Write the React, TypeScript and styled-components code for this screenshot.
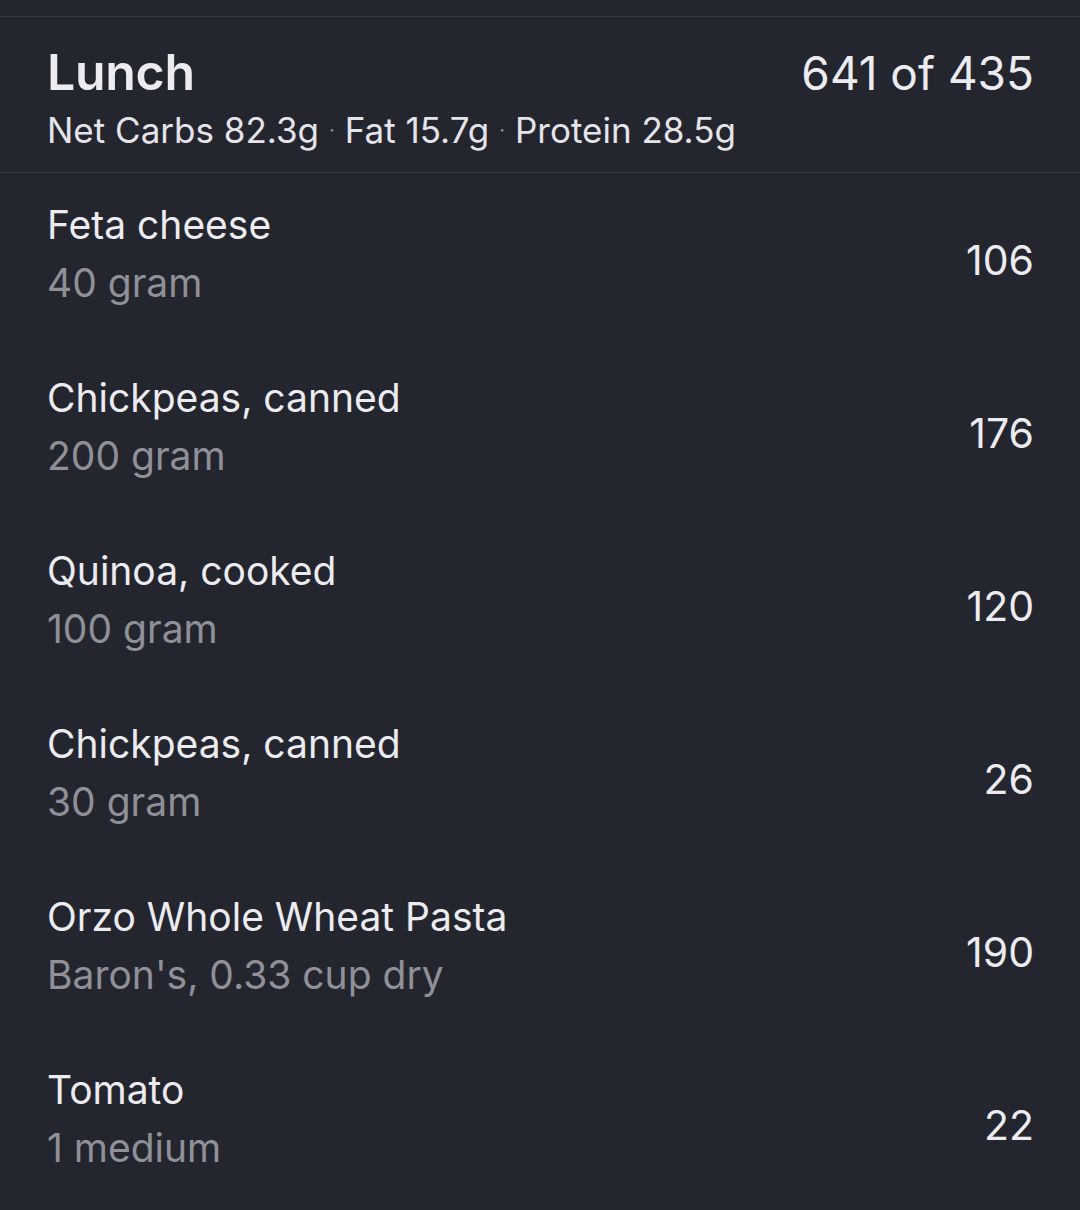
import React from "react"
import styled, { createGlobalStyle } from "styled-components"

const GlobalStyle = createGlobalStyle`
  html, body {
    margin: 0;
    padding: 0;
    background: #24262f;
  }
  body {
    font-family: Inter, "Noto Sans", "Liberation Sans", sans-serif;
    -webkit-font-smoothing: antialiased;
  }
`

const Page = styled.div`
  width: 1080px;
  min-height: 1210px;
  background: #24262f;
  padding-top: 16px;
  box-sizing: border-box;
`

const Section = styled.section`
  border-top: 1px solid #363843;
`

const Header = styled.header`
  display: flex;
  flex-direction: column;
  gap: 6px;
  padding: 25px 46px 21px 47px;
  border-bottom: 1px solid #363843;
`

const TitleRow = styled.div`
  display: flex;
  justify-content: space-between;
  align-items: baseline;
`

const Title = styled.h2`
  margin: 0;
  font-size: 50px;
  font-weight: 600;
  color: #ececf0;
  letter-spacing: -0.3px;
  line-height: 60px;
`

const Total = styled.div`
  font-size: 46px;
  font-weight: 400;
  color: #ececf0;
  line-height: 60px;
`

const Macros = styled.div`
  display: flex;
  align-items: center;
  gap: 10px;
  font-size: 35px;
  color: #e4e4ea;
  line-height: 42px;
`

const Dot = styled.span`
  color: #8d8f98;
  font-size: 20px;
`

const FoodRow = styled.div`
  display: flex;
  justify-content: space-between;
  align-items: center;
  height: 173px;
  padding: 0 46px 0 47px;
  box-sizing: border-box;
`

const FoodInfo = styled.div`
  display: flex;
  flex-direction: column;
  padding-bottom: 11px;
`

const FoodName = styled.div`
  font-size: 39px;
  color: #ececf0;
  line-height: 58px;
`

const FoodAmount = styled.div`
  font-size: 39px;
  color: #8f9098;
  line-height: 58px;
`

const Calories = styled.div`
  font-size: 41px;
  color: #ececf0;
`

const foods = [
  { name: "Feta cheese", amount: "40 gram", cal: 106 },
  { name: "Chickpeas, canned", amount: "200 gram", cal: 176 },
  { name: "Quinoa, cooked", amount: "100 gram", cal: 120 },
  { name: "Chickpeas, canned", amount: "30 gram", cal: 26 },
  { name: "Orzo Whole Wheat Pasta", amount: "Baron's, 0.33 cup dry", cal: 190 },
  { name: "Tomato", amount: "1 medium", cal: 22 },
]

export default function App() {
  return (
    <Page>
      <GlobalStyle />
      <Section>
        <Header>
          <TitleRow>
            <Title>Lunch</Title>
            <Total>641 of 435</Total>
          </TitleRow>
          <Macros>
            <span>Net Carbs 82.3g</span>
            <Dot>·</Dot>
            <span>Fat 15.7g</span>
            <Dot>·</Dot>
            <span>Protein 28.5g</span>
          </Macros>
        </Header>
        {foods.map((f, i) => (
          <FoodRow key={i}>
            <FoodInfo>
              <FoodName>{f.name}</FoodName>
              <FoodAmount>{f.amount}</FoodAmount>
            </FoodInfo>
            <Calories>{f.cal}</Calories>
          </FoodRow>
        ))}
      </Section>
    </Page>
  )
}
